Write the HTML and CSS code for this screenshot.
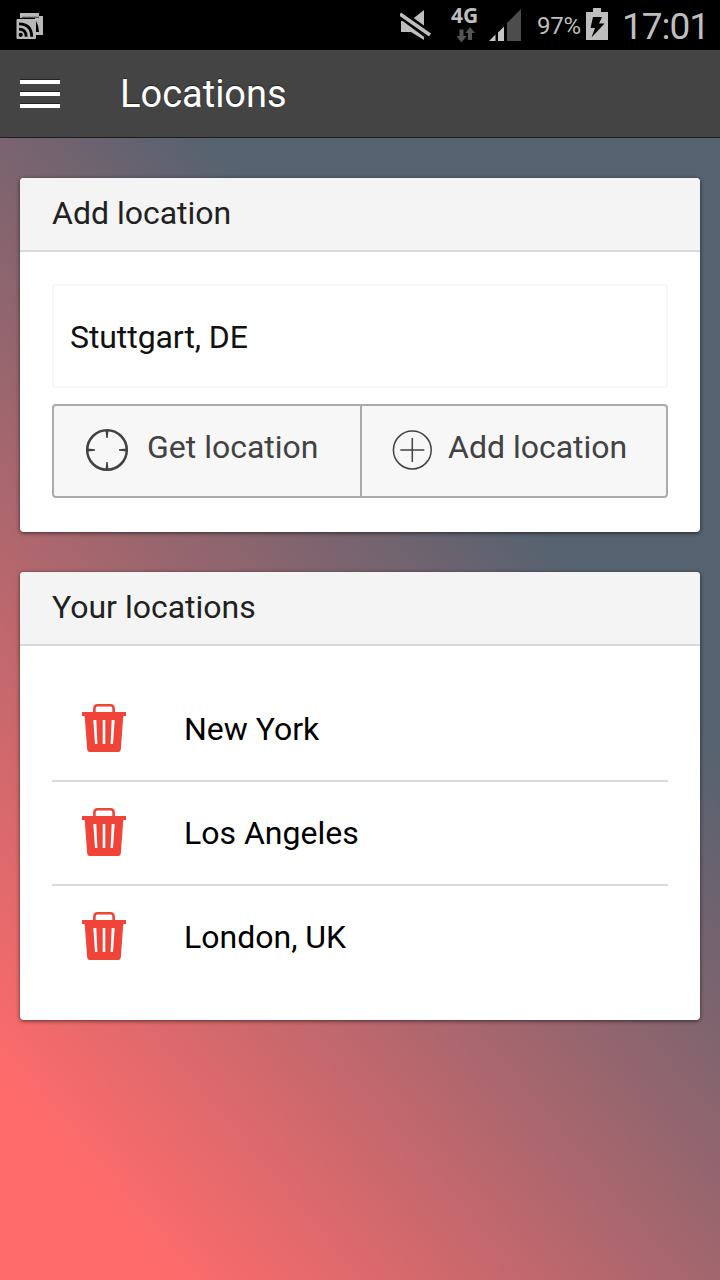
FILE: index.html
```html
<!DOCTYPE html>
<html lang="en">
<head>
<meta charset="utf-8">
<title>Locations</title>
<link rel="stylesheet" href="styles.css">
</head>
<body>
<svg class="symbols" aria-hidden="true">
  <symbol id="trash" viewBox="0 0 44 48">
    <path d="M12.400 9V4.500Q12.400 1.300 15.600 1.300H28.400Q31.600 1.300 31.600 4.500V9" fill="none" stroke="#f04438" stroke-width="2.600"/>
    <path fill="#f04438" fill-rule="evenodd" d="M0 8H44V12H41.300L38.800 45.500Q38.600 48 36.100 48H7.900Q5.400 48 5.200 45.500L2.700 12H0ZM11.300 16L13 40H15.400L14.300 16ZM20.700 16V40H23.300V16ZM29.700 16L28.600 40H31L32.700 16Z"/>
  </symbol>
</svg>
<div class="statusbar">
  <svg class="cast" width="28" height="28" viewBox="0 0 28 28">
    <path fill="#b9b9b9" d="M4 1h19v3h4v19h-8V6H4z"/>
    <path d="M6 4.700h17v1.300H6z" fill="#555"/>
    <path d="M20 9q3 5 3 11h-3z" fill="#000"/>
    <rect x=".5" y="7" width="19.500" height="20" rx="1" fill="#b9b9b9"/>
    <circle cx="4.700" cy="22.800" r="2.100"/>
    <path d="M3 17.200q7 0 7.200 7.500M3 11.800q12.500 0 12.700 13" fill="none" stroke="#000" stroke-width="2.800"/>
  </svg>
  <div class="indicators">
    <svg class="mute" width="34" height="34" viewBox="0 0 34 34">
      <path fill="#bebebe" d="M1 12h9L24 1v30L11 23H1z"/>
      <path d="M-2 3L32 28" stroke="#000" stroke-width="9"/>
      <path d="M0 5L30 26" stroke="#bebebe" stroke-width="3.600"/>
    </svg>
    <div class="network">
      <span class="network-type">4G</span>
      <svg width="18" height="16" viewBox="0 0 18 16"><path fill="#555" d="M2.500 2.500h4V9h3L4.500 15.500-.5 9h3zM11 13h4V6h3l-5-6-4.500 6H11z"/></svg>
    </div>
    <svg class="signal" width="32" height="33" viewBox="0 0 32 33">
      <path fill="#c6c6c6" d="M0 32L6.500 25.500V32zM9 23.500L15 17.500V32H9z"/>
      <path fill="#4c4c4c" d="M18 14L32 0V32H18z"/>
    </svg>
    <span class="percent">97%</span>
    <svg class="battery" width="22" height="32" viewBox="0 0 22 32">
      <path fill="#bebebe" d="M7 0h8v4h7v28H0V4h7z"/>
      <path d="M7 9h9l-3 6.500h5.500L5.500 29.500 9 20H4.500z"/>
    </svg>
    <span class="clock">17:01</span>
  </div>
</div>
<header class="appbar">
  <div class="menu"><i></i><i></i><i></i></div>
  <h1>Locations</h1>
</header>
<main class="page">
  <section class="card">
    <h2>Add location</h2>
    <div class="form">
      <div class="field">Stuttgart, DE</div>
      <div class="actions">
        <div class="action get">
          <svg width="44" height="44" viewBox="0 0 44 44"><circle cx="22" cy="22" r="19.800" fill="none" stroke="#424242" stroke-width="2.500"/><path fill="#424242" d="M20.500 2h3l-.8 8h-1.400zM20.500 42h3l-.8-8h-1.400zM2 20.500v3l8-.8v-1.400zM42 20.500v3l-8-.8v-1.400z"/></svg>
          <span>Get location</span>
        </div>
        <div class="action add">
          <svg width="40" height="40" viewBox="0 0 40 40"><g fill="none" stroke="#424242" stroke-width="1.500"><circle cx="20.300" cy="20" r="18.900"/><path d="M20.300 8v24M8.300 20h24"/></g></svg>
          <span>Add location</span>
        </div>
      </div>
    </div>
  </section>
  <section class="card">
    <h2>Your locations</h2>
    <ul class="list">
      <li><svg width="44" height="48"><use href="#trash"/></svg><span>New York</span></li>
      <li><svg width="44" height="48"><use href="#trash"/></svg><span>Los Angeles</span></li>
      <li><svg width="44" height="48"><use href="#trash"/></svg><span>London, UK</span></li>
    </ul>
  </section>
</main>
</body>
</html>
```
FILE: styles.css
```css
* { box-sizing: border-box; }
body {
  margin: 0;
  height: 1280px;
  display: flex;
  flex-direction: column;
  overflow: hidden;
  font-family: Roboto, sans-serif;
  font-size: 32px;
  color: #000;
}
svg { display: block; flex: none; }
.symbols { display: none; }
.statusbar {
  height: 50px;
  flex: none;
  display: flex;
  justify-content: space-between;
  background: #000;
  color: #bebebe;
}
.cast { margin: 12px 0 0 16px; }
.indicators { display: flex; width: 322px; }
.mute { margin: 9px 0 0 2px; }
.network { width: 30px; margin: 5px 0 0 17px; }
.network-type {
  display: block;
  height: 22px;
  font: 700 21px/21px "Open Sans", sans-serif;
}
.network svg { margin-left: 6px; }
.signal { margin: 9px 0 0 8px; }
.percent { width: 48px; margin-left: 16px; font-size: 24px; letter-spacing: -0.3px; line-height: 53px; }
.battery { margin: 8px 0 0 1px; }
.clock { margin-left: 14px; font-size: 37px; letter-spacing: -1px; line-height: 53px; white-space: nowrap; }
.appbar {
  height: 88px;
  flex: none;
  display: flex;
  padding-left: 20px;
  background: #444;
  border-bottom: 1px solid #1c1c1c;
  color: #fff;
}
.menu { display: grid; gap: 8px; align-content: start; width: 40px; margin-top: 30px; }
.menu i { height: 4px; background: #fff; box-shadow: 0 -1px 1px #222; }
.appbar h1 {
  margin: 0 0 0 60px;
  font-size: 38px;
  font-weight: 400;
  line-height: 88px;
  text-shadow: 0 -1px 1px #222;
}
.page {
  flex: 1;
  display: flex;
  flex-direction: column;
  gap: 40px;
  padding: 40px 20px;
  background: linear-gradient(50deg, #ff6b6b 10%, #556270 70%);
}
.card {
  border-radius: 4px;
  background: #fff;
  box-shadow: 0 1px 4px rgba(0, 0, 0, .6);
}
.card h2 {
  height: 74px;
  margin: 0;
  padding-left: 32px;
  border-bottom: 2px solid #d9d9d9;
  border-radius: 4px 4px 0 0;
  background: #f4f4f4;
  color: #212121;
  font-size: 32px;
  font-weight: 400;
  line-height: 70px;
}
.form { padding: 32px 32px 34px; }
.field {
  height: 104px;
  padding-left: 16px;
  border: 2px solid #f7f7f7;
  border-radius: 4px;
  color: #111;
  letter-spacing: -0.08px;
  line-height: 102px;
}
.actions {
  display: flex;
  height: 94px;
  margin-top: 16px;
  border: 2px solid #aaa;
  border-radius: 4px;
  background: #f7f7f7;
  color: #424242;
  line-height: 82px;
}
.action { display: flex; }
.get { width: 308px; padding-left: 31px; border-right: 2px solid #aaa; }
.get svg { margin: 22px 18px 0 0; }
.add { padding-left: 30px; }
.add svg { margin: 24px 16px 0 0; }
.list { margin: 0; padding: 32px; list-style: none; }
.list li { display: flex; height: 104px; padding: 26px 0 0 30px; border-bottom: 2px solid #d9d9d9; }
.list li:last-child { height: 102px; border-bottom: 0; }
.list span { margin-left: 58px; line-height: 50px; }
```
